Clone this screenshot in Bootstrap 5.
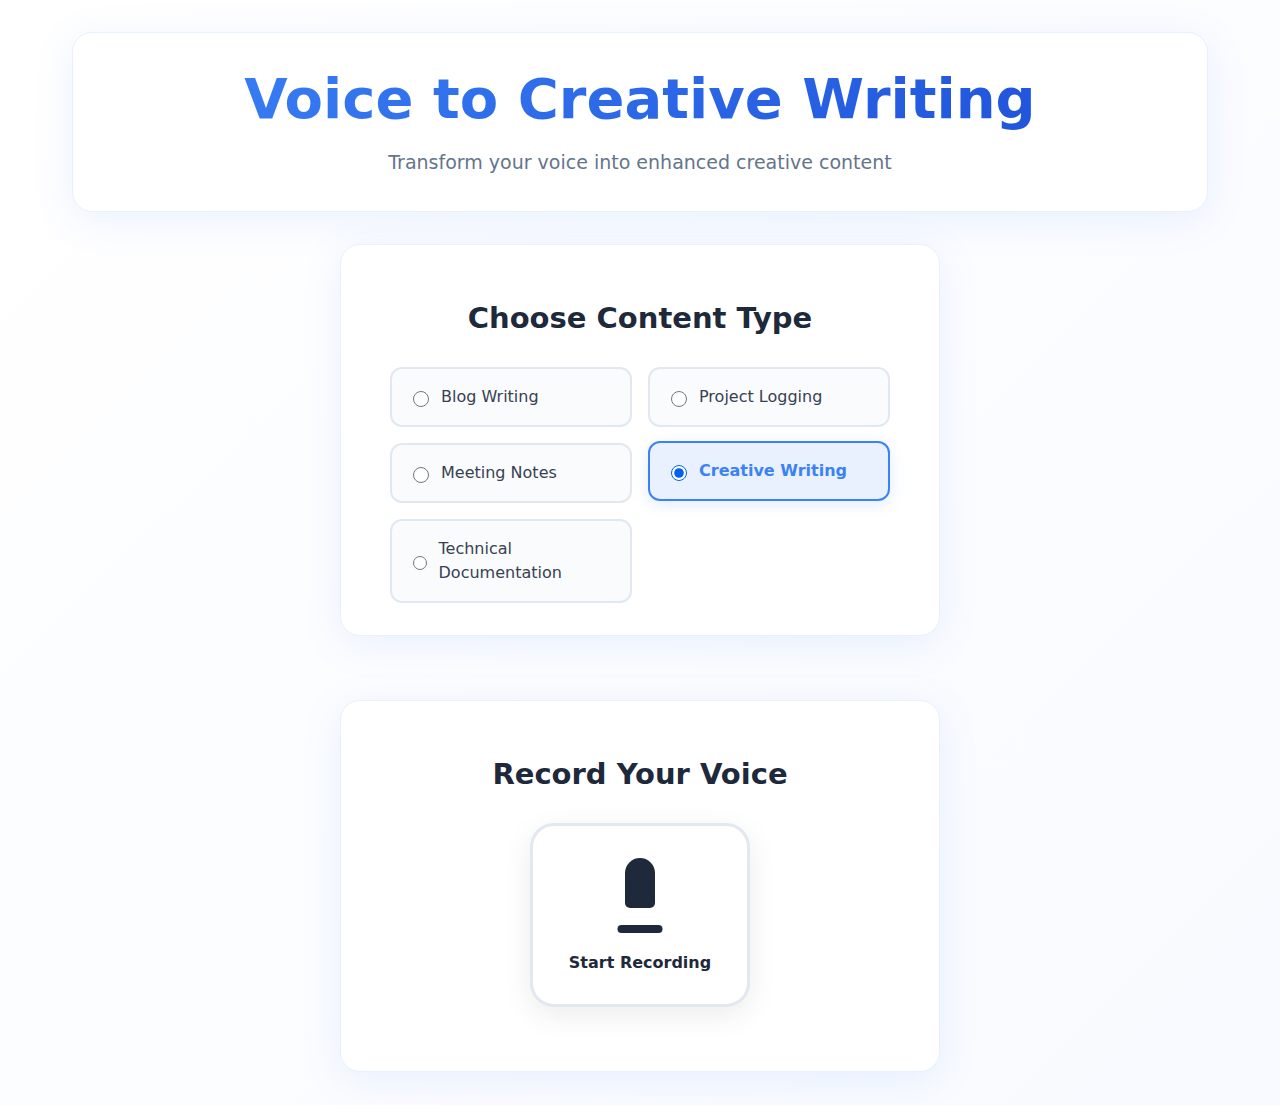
<!DOCTYPE html>
<html lang="en">
<head>
<meta charset="utf-8">
<meta name="viewport" content="width=device-width, initial-scale=1">
<title>Voice to Creative Writing</title>
<link href="https://cdn.jsdelivr.net/npm/bootstrap@5.3.0/dist/css/bootstrap.min.css" rel="stylesheet">
<style>
  body {
    min-height: 100vh;
    font-family: "DejaVu Sans", sans-serif;
    color: #1e293b;
    background: linear-gradient(135deg, #fff 0%, #f8faff 100%);
  }
  .page { max-width: 1200px; padding: 32px; }
  .panel {
    background: #fff;
    border: 1px solid #e8f0fe;
    border-radius: 20px;
    box-shadow: 0 8px 40px rgba(59, 130, 246, .1);
  }
  .hero { padding: 32px 32px 34px; margin-bottom: 32px; }
  .hero-title {
    font-size: 56px;
    line-height: 67px;
    background: linear-gradient(135deg, #3b82f6, #1d4ed8);
    -webkit-background-clip: text;
    background-clip: text;
    color: transparent;
  }
  .hero-text { font-size: 19px; line-height: 29px; color: #64748b; }
  .panel-narrow { width: 100%; max-width: 600px; padding: 48px 48px 32px; }
  .panel-title { font-size: 29px; line-height: 50px; margin-bottom: 24px; }
  .choices {
    display: grid;
    grid-template-columns: repeat(2, 1fr);
    gap: 16px;
    max-width: 500px;
  }
  .choice {
    padding: 16px 21px;
    gap: 12px;
    border: 2px solid #e2e8f0;
    border-radius: 12px;
    background: #fafbfd;
    color: #374151;
    cursor: pointer;
  }
  .choice input { width: 16px; height: 16px; margin: 4px 0 0; accent-color: #0060f0; }
  .choice:has(input:checked) {
    border-color: #3b82f6;
    background: #eaf1fe;
    color: #3b82f6;
    font-weight: 600;
    transform: translateY(-2px);
    box-shadow: 0 4px 15px rgba(59, 130, 246, .15);
  }
  .panels { gap: 64px; }
  .record-area { padding-bottom: 32px; }
  .record {
    min-width: 220px;
    padding: 32px;
    gap: 16px;
    border: 3px solid #e2e8f0;
    border-radius: 24px;
    background: #fff;
    color: #1e293b;
    font-weight: 600;
    line-height: 18px;
    box-shadow: 0 8px 30px rgba(0, 0, 0, .08);
  }
</style>
<script src="https://cdn.jsdelivr.net/npm/bootstrap@5.3.0/dist/js/bootstrap.bundle.min.js" defer></script>
</head>
<body>
<div class="page container-fluid">
  <header class="panel hero text-center">
    <h1 class="hero-title fw-bold mb-3">Voice to Creative Writing</h1>
    <p class="hero-text mb-0">Transform your voice into enhanced creative content</p>
  </header>

  <main class="panels d-flex flex-column align-items-center">
    <section class="panel panel-narrow" aria-labelledby="type-title">
      <h2 class="panel-title fw-semibold text-center" id="type-title">Choose Content Type</h2>
      <div class="choices mx-auto" role="radiogroup" aria-labelledby="type-title">
        <label class="choice d-flex align-items-center" for="type-blog">
          <input type="radio" name="type" id="type-blog" value="blog"><span>Blog Writing</span>
        </label>
        <label class="choice d-flex align-items-center" for="type-project">
          <input type="radio" name="type" id="type-project" value="project"><span>Project Logging</span>
        </label>
        <label class="choice d-flex align-items-center" for="type-meeting">
          <input type="radio" name="type" id="type-meeting" value="meeting"><span>Meeting Notes</span>
        </label>
        <label class="choice d-flex align-items-center" for="type-creative">
          <input type="radio" name="type" id="type-creative" value="creative" checked><span>Creative Writing</span>
        </label>
        <label class="choice d-flex align-items-center" for="type-technical">
          <input type="radio" name="type" id="type-technical" value="technical"><span>Technical Documentation</span>
        </label>
      </div>
    </section>

    <section class="panel panel-narrow" aria-labelledby="record-title">
      <h2 class="panel-title fw-semibold text-center" id="record-title">Record Your Voice</h2>
      <div class="record-area d-flex justify-content-center">
        <button class="record d-flex flex-column align-items-center" type="button">
          <svg width="80" height="80" viewBox="0 0 80 80" fill="currentColor" aria-hidden="true">
            <path d="M25 15a15 15 0 0 1 30 0v30a5 5 0 0 1-5 5H30a5 5 0 0 1-5-5z"/>
            <rect x="17.5" y="67" width="45" height="8" rx="4"/>
          </svg>
          <span>Start Recording</span>
        </button>
      </div>
    </section>
  </main>
</div>
</body>
</html>
